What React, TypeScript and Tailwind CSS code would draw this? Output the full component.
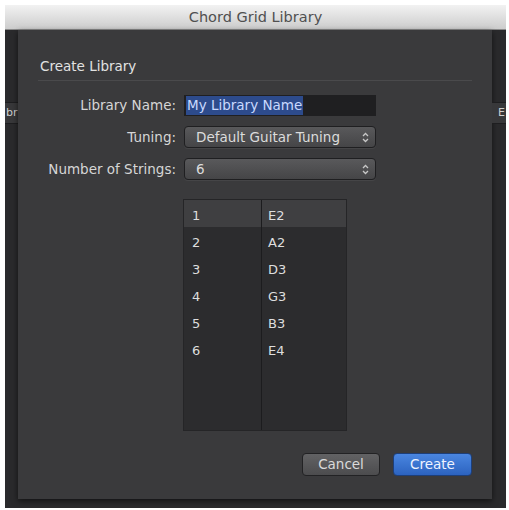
import React from 'react';

const strings = [
  { n: '1', note: 'E2' },
  { n: '2', note: 'A2' },
  { n: '3', note: 'D3' },
  { n: '4', note: 'G3' },
  { n: '5', note: 'B3' },
  { n: '6', note: 'E4' },
];

function Stepper() {
  return (
    <svg width="7" height="11" viewBox="0 0 7 11" className="shrink-0">
      <path d="M1 4 L3.5 1.5 L6 4" fill="none" stroke="#c8c8c8" strokeWidth="1.3" />
      <path d="M1 7 L3.5 9.5 L6 7" fill="none" stroke="#c8c8c8" strokeWidth="1.3" />
    </svg>
  );
}

function Popup({ value }: { value: string }) {
  return (
    <div className="flex h-[22px] items-center justify-between rounded-[4px] border border-[#1f1f21] bg-gradient-to-b from-[#59595b] to-[#454547] pl-[11px] pr-[6px] text-[13.5px] text-[#dcdcdc] shadow-[0_1px_0_rgba(255,255,255,0.06)]">
      <span>{value}</span>
      <Stepper />
    </div>
  );
}

export default function App() {
  return (
    <div className="h-[510px] w-[509px] bg-white px-[5px] pt-[5px] font-['DejaVu_Sans','Liberation_Sans',sans-serif]">
      <div className="flex h-[503px] w-[501px] flex-col overflow-hidden bg-[#2a2a2c]">
        {/* title bar */}
        <div className="flex h-[25px] shrink-0 items-center justify-center border-b border-[#8a8a8a] bg-gradient-to-b from-[#f2f2f2] to-[#cdcdcd] pt-[1px] text-[14.5px] text-[#505050]">
          Chord Grid Library
        </div>

        <div className="flex flex-1">
          {/* behind the sheet, left */}
          <div className="flex w-[13px] shrink-0 flex-col">
            <div className="mt-[72px] flex h-[22px] items-center overflow-hidden border-y border-[#1e1e20] bg-[#38383a] pl-[1px] text-[11px] text-[#cfcfcf]">
              br
            </div>
          </div>

          {/* sheet */}
          <div className="flex h-[469px] w-[474px] flex-col bg-[#3a3a3c] px-[20px] pt-[28px] shadow-[0_2px_6px_rgba(0,0,0,0.6)]">
            <div className="pl-[2px] text-[13.5px] leading-[16px] text-[#e2e2e2]">Create Library</div>
            <div className="mt-[6px] h-px bg-[#4a4a4c]" />

            <div className="-ml-[20px] mt-[14px] grid grid-cols-[158px_192px] items-center gap-x-[8px] gap-y-[10px] text-[13.5px] text-[#d6d6d6]">
              <div className="text-right">Library Name:</div>
              <div className="flex h-[21px] items-center bg-[#1f1f21] pl-[2px]">
                <span className="bg-[#2d4b8c] px-[1px] leading-[19px] text-[#c9d9ff]">My Library Name</span>
              </div>

              <div className="text-right">Tuning:</div>
              <Popup value="Default Guitar Tuning" />

              <div className="text-right">Number of Strings:</div>
              <Popup value="6" />
            </div>

            {/* table */}
            <div className="ml-[145px] mt-[19px] flex h-[232px] w-[164px] border border-[#252527] bg-[#2c2c2e]">
              <div className="w-[78px] border-r border-[#1c1c1e]">
                {strings.map((s, i) => (
                  <div
                    key={s.n}
                    className={`flex h-[27px] items-center pl-[8px] pt-[4px] text-[13px] text-[#dedede] ${i === 0 ? 'bg-[#3f3f41]' : ''}`}
                  >
                    {s.n}
                  </div>
                ))}
              </div>
              <div className="flex-1">
                {strings.map((s, i) => (
                  <div
                    key={s.note}
                    className={`flex h-[27px] items-center pl-[6px] pt-[4px] text-[13px] text-[#dedede] ${i === 0 ? 'bg-[#3f3f41]' : ''}`}
                  >
                    {s.note}
                  </div>
                ))}
              </div>
            </div>

            <div className="mt-[22px] flex justify-end gap-[13px]">
              <button className="h-[23px] w-[78px] rounded-[4px] border border-[#222224] bg-gradient-to-b from-[#626264] to-[#4c4c4e] text-[13.5px] text-[#dadada]">
                Cancel
              </button>
              <button className="h-[23px] w-[79px] rounded-[4px] border border-[#1d3f7a] bg-gradient-to-b from-[#4a86e0] to-[#2c63c0] text-[13.5px] text-[#eef3ff]">
                Create
              </button>
            </div>
          </div>

          {/* behind the sheet, right */}
          <div className="flex flex-1 flex-col">
            <div className="mt-[72px] flex h-[22px] items-center justify-end overflow-hidden border-y border-[#1e1e20] bg-[#38383a] pr-[1px] text-[11px] text-[#cfcfcf]">
              E
            </div>
          </div>
        </div>
      </div>
    </div>
  );
}
